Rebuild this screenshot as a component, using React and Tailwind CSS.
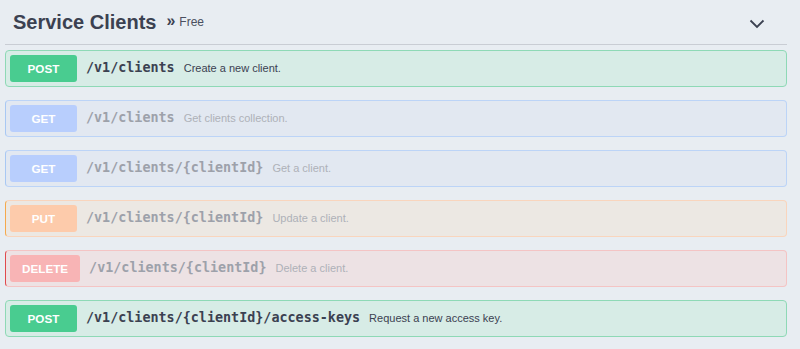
import React from 'react';

const ops = [
    { method: 'POST', path: '/v1/clients', desc: 'Create a new client.', tone: 'post' },
    { method: 'GET', path: '/v1/clients', desc: 'Get clients collection.', tone: 'get' },
    { method: 'GET', path: '/v1/clients/{clientId}', desc: 'Get a client.', tone: 'get' },
    { method: 'PUT', path: '/v1/clients/{clientId}', desc: 'Update a client.', tone: 'put' },
    { method: 'DELETE', path: '/v1/clients/{clientId}', desc: 'Delete a client.', tone: 'delete' },
    { method: 'POST', path: '/v1/clients/{clientId}/access-keys', desc: 'Request a new access key.', tone: 'post' },
];

// faded rows = the ones this plan can't use
const tones = {
    post: {
        block: 'bg-[#d7ece6] border-[#8ed9b6]',
        badge: 'bg-[#49cc90]',
        path: 'text-[#3b4151]',
        desc: 'text-[#3b4151]',
    },
    get: {
        block: 'bg-[#e2e8f1] border-[#bcd4f7] border-l-[#a8c8f3]',
        badge: 'bg-[#b8cefd]',
        path: 'text-[#9da1aa]',
        desc: 'text-[#aeb1b8]',
    },
    put: {
        block: 'bg-[#ece8e3] border-[#f9d5bd] border-l-[#f5a94c]',
        badge: 'bg-[#fdcbab]',
        path: 'text-[#9da1aa]',
        desc: 'text-[#aeb1b8]',
    },
    delete: {
        block: 'bg-[#ede2e4] border-[#f4c4c4] border-l-[#e0494d]',
        badge: 'bg-[#f8b4b5]',
        path: 'text-[#9da1aa]',
        desc: 'text-[#aeb1b8]',
    },
};

const sans = "font-['Liberation_Sans',Arial,sans-serif]";

const OpBlock = ({ op }) => {
    const t = tones[op.tone];
    return (
        <div className={`h-[37px] mb-[13px] border rounded-[4px] flex items-center px-[4px] ${t.block}`}>
            <span className={`${t.badge} ${sans} min-w-[67px] h-[27px] px-[12px] rounded-[3px] flex items-center justify-center text-white font-bold text-[11.7px]`}>
                {op.method}
            </span>
            <span className={`${t.path} ml-[9px] font-['DejaVu_Sans_Mono',monospace] font-bold text-[13.4px]`}>
                {op.path}
            </span>
            <span className={`${t.desc} ${sans} ml-[9px] text-[11px]`}>{op.desc}</span>
        </div>
    );
};

export default function App() {
    return (
        <div className="w-[800px] h-[349px] bg-[#e8edf2] pl-[5px] pr-[13px] overflow-hidden">
            <div className="h-[45px] border-b border-[#c9cdd4] flex items-center pl-[8px] pr-[22px] text-[#3b4151]">
                <h2 className={`${sans} font-bold text-[20px] leading-none`}>Service Clients</h2>
                <span className={`${sans} ml-[10px] text-[12px] leading-none flex items-center text-[#4a5060]`}>
                    <span className="font-bold text-[16px] mr-[4px] -mt-[2px] text-[#3b4151]">»</span>Free
                </span>
                <svg className="ml-auto mt-[3px]" width="16" height="10" viewBox="0 0 16 10" fill="none">
                    <path d="M1.5 1.5 L8 8 L14.5 1.5" stroke="#3b4151" strokeWidth="1.8" />
                </svg>
            </div>
            <div className="pt-[5px]">
                {ops.map((op, i) => (
                    <OpBlock key={i} op={op} />
                ))}
            </div>
        </div>
    );
}
